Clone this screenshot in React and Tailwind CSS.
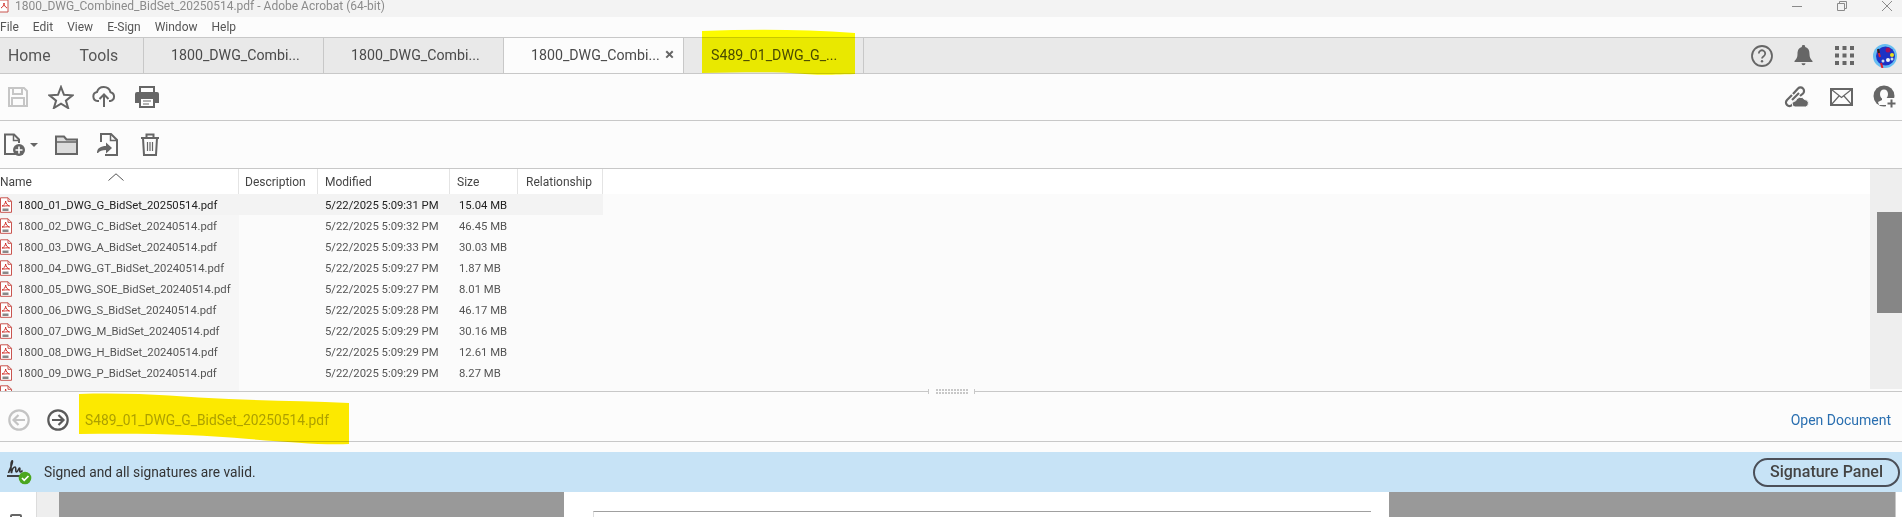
import React from 'react'

const files = [
  ['1800_01_DWG_G_BidSet_20250514.pdf', '5/22/2025 5:09:31 PM', '15.04 MB'],
  ['1800_02_DWG_C_BidSet_20240514.pdf', '5/22/2025 5:09:32 PM', '46.45 MB'],
  ['1800_03_DWG_A_BidSet_20240514.pdf', '5/22/2025 5:09:33 PM', '30.03 MB'],
  ['1800_04_DWG_GT_BidSet_20240514.pdf', '5/22/2025 5:09:27 PM', '1.87 MB'],
  ['1800_05_DWG_SOE_BidSet_20240514.pdf', '5/22/2025 5:09:27 PM', '8.01 MB'],
  ['1800_06_DWG_S_BidSet_20240514.pdf', '5/22/2025 5:09:28 PM', '46.17 MB'],
  ['1800_07_DWG_M_BidSet_20240514.pdf', '5/22/2025 5:09:29 PM', '30.16 MB'],
  ['1800_08_DWG_H_BidSet_20240514.pdf', '5/22/2025 5:09:29 PM', '12.61 MB'],
  ['1800_09_DWG_P_BidSet_20240514.pdf', '5/22/2025 5:09:29 PM', '8.27 MB'],
]

function PdfIcon() {
  return (
    <svg width="14" height="16" viewBox="0 0 14 16" className="shrink-0 -ml-[1px]">
      <path d="M1.500 .8h7.500l3.500 3.500v11h-11z" fill="#fff" stroke="#c9544f" strokeWidth="1" />
      <path d="M9 .8v3.500h3.500" fill="none" stroke="#c9544f" />
      <path d="M3 9c2-.6 3.600-2.600 3.600-5M6.600 4c.2 2.600 2 4.600 4 5M3 9c1.500.4 5-.6 7.600 0" fill="none" stroke="#d2302a" strokeWidth="1" />
      <rect x="3.500" y="11.500" width="6" height="2.500" fill="#555" opacity=".7" />
    </svg>
  )
}

function Tab({ label, active, close }) {
  return (
    <div className={active ? 'relative flex h-full w-[180px] items-center border-r border-[#c8c8c8] bg-[#fcfcfc] pl-[27px] text-[#4a4a4a]' : 'relative flex h-full w-[180px] items-center border-r border-[#c8c8c8] pl-[27px] text-[#4a4a4a]'}>
      <span>{label}</span>
      {close && <span className="absolute left-[161px] top-[8px] text-[17px] font-bold leading-none text-[#666]">×</span>}
    </div>
  )
}

function Save() {
  return (
    <svg width="22" height="22" viewBox="0 0 22 22" fill="none" stroke="#c6c6c6" strokeWidth="2">
      <path d="M2 2h15l3 3v15H2z" />
      <path d="M6 2v6h9V2M5 20v-8h12v8" />
    </svg>
  )
}

function Star() {
  return (
    <svg width="26" height="24" viewBox="0 0 26 24" fill="none" stroke="#666" strokeWidth="2" strokeLinejoin="miter">
      <path d="M13 2l3 7.800 8.500.5-6.600 5.300 2.200 7.400L13 18.600 5.900 23l2.200-7.400L1.500 10.300l8.500-.5z" />
    </svg>
  )
}

function Upload() {
  return (
    <svg width="24" height="22" viewBox="0 0 24 22" fill="none" stroke="#666" strokeWidth="2">
      <path d="M7 15H5.500a4.500 4.500 0 0 1-.5-8.900A7 7 0 0 1 18.500 6.200 4.500 4.500 0 0 1 18.500 15H17" />
      <path d="M12 21V9M7.500 13l4.500-4.500 4.500 4.500" />
    </svg>
  )
}

function Printer() {
  return (
    <svg width="24" height="22" viewBox="0 0 24 22">
      <path d="M5 1h14v6H5z" fill="none" stroke="#666" strokeWidth="2" />
      <path d="M2 6h20a2 2 0 0 1 2 2v9h-4v-5H4v5H0V8a2 2 0 0 1 2-2z" fill="#666" />
      <path d="M5 12h14v9H5z" fill="#fff" stroke="#666" strokeWidth="2" />
      <path d="M8 15h8M8 18h6" stroke="#666" />
    </svg>
  )
}

function NewDoc() {
  return (
    <svg width="24" height="24" viewBox="0 0 24 24" fill="none">
      <path d="M12 21H2V1.500h9l5 5V10" stroke="#666" strokeWidth="2" />
      <path d="M10.500 1.500V7.500H16" stroke="#666" strokeWidth="1.500" />
      <circle cx="16" cy="17" r="6" fill="#666" />
      <path d="M16 13.500v7M12.500 17h7" stroke="#fff" strokeWidth="1.600" />
    </svg>
  )
}

function Folder() {
  return (
    <svg width="23" height="20" viewBox="0 0 23 20">
      <path d="M1 19V1.500h8l2.500 3H22V19z" fill="#dcdcdc" stroke="#666" strokeWidth="2" />
      <path d="M1 7h21" stroke="#666" strokeWidth="1.500" />
    </svg>
  )
}

function MoveDoc() {
  return (
    <svg width="22" height="23" viewBox="0 0 22 23" fill="none">
      <path d="M5 9V1h10l6 6v15H9" stroke="#666" strokeWidth="2" />
      <path d="M14.500 1v6.500H21" stroke="#666" strokeWidth="1.500" />
      <path d="M1 20c0-5 4-7 9-7V9.500l6 5.500-6 5.500V17c-4 0-6 .8-8 3z" fill="#666" />
    </svg>
  )
}

function Trash() {
  return (
    <svg width="20" height="23" viewBox="0 0 20 23" fill="none" stroke="#666" strokeWidth="2">
      <path d="M1 5h18M6.500 5V1.500h7V5M3 5l1 17h12l1-17" />
      <path d="M7.500 9v9M10 9v9M12.500 9v9" strokeWidth="1.200" />
    </svg>
  )
}

function Help() {
  return (
    <svg width="22" height="22" viewBox="0 0 22 22" fill="none">
      <circle cx="11" cy="11" r="10" stroke="#666" strokeWidth="1.800" />
      <path d="M7.800 8.500a3.200 3.200 0 1 1 4.900 2.700c-1 .7-1.700 1.300-1.700 2.300" stroke="#666" strokeWidth="1.800" />
      <circle cx="11" cy="16.300" r="1.200" fill="#666" />
    </svg>
  )
}

function Bell() {
  return (
    <svg width="19" height="21" viewBox="0 0 19 21" fill="#666">
      <path d="M9.500 0a1.600 1.600 0 0 1 1.600 1.900C14.500 2.700 15.500 5.500 15.500 9c0 3.500 1 5 3 7v1H.5v-1c2-2 3-3.500 3-7 0-3.500 1-6.300 4.400-7.100A1.600 1.600 0 0 1 9.500 0z" />
      <path d="M7.500 18.300h4a2 2 0 0 1-4 0z" />
    </svg>
  )
}

function Apps() {
  const cells = [0, 7.5, 15]
  return (
    <svg width="19" height="19" viewBox="0 0 19 19" fill="#666">
      {cells.map((y) => cells.map((x) => <rect key={`${x}-${y}`} x={x} y={y} width="4" height="4" />))}
    </svg>
  )
}

function Avatar() {
  return (
    <svg width="24" height="24" viewBox="0 0 24 24">
      <circle cx="12" cy="12" r="12" fill="#66bdf2" />
      <circle cx="12.500" cy="12" r="9.500" fill="#1c32c4" />
      <path d="M5 6l2 7M8 19l1.500 5" stroke="#e02030" strokeWidth="2" />
      <path d="M5 5l1 4" stroke="#222" strokeWidth="2" />
      <circle cx="15" cy="6" r="2.500" fill="#a01060" />
      <circle cx="19" cy="11" r="2" fill="#e8e020" />
      <circle cx="15" cy="16" r="2" fill="#f4f4f4" />
      <circle cx="10" cy="17" r="1.500" fill="#cde" />
      <circle cx="19" cy="15" r="1.500" fill="#cde" />
    </svg>
  )
}

function LinkCloud() {
  return (
    <svg width="25" height="22" viewBox="0 0 25 22" fill="none">
      <path d="M8 9l-5 5a3.400 3.400 0 0 0 5 5l4-4" stroke="#666" strokeWidth="2.200" />
      <path d="M8 14l7-7" stroke="#666" strokeWidth="2.200" />
      <path d="M9 8l5-5.500a3.400 3.400 0 0 1 5 5L16 10" stroke="#666" strokeWidth="2.200" />
      <path d="M11 21a3 3 0 0 1 .5-6 5 5 0 0 1 9-1.500 3.800 3.800 0 0 1 1 7.500z" fill="#666" stroke="#fcfcfc" />
    </svg>
  )
}

function Mail() {
  return (
    <svg width="23" height="18" viewBox="0 0 23 18" fill="none" stroke="#666">
      <rect x="1" y="1" width="21" height="16" strokeWidth="2" />
      <path d="M1.500 1.500l10 8 10-8M1.500 16.500l7.500-8.500M21.500 16.500L14 8" strokeWidth="1.200" />
    </svg>
  )
}

function UserAdd() {
  return (
    <svg width="24" height="24" viewBox="0 0 24 24">
      <circle cx="11" cy="11" r="10.500" fill="#666" />
      <path d="M11 4.500c2.500 0 4 2 4 4.500 0 2-.8 3.500-2 4.500v1.500l4 2-2 3H6l-1-3 4-2v-1.500C7.800 12.500 7 11 7 9c0-2.500 1.500-4.500 4-4.500z" fill="#fcfcfc" />
      <rect x="13" y="13" width="11" height="11" fill="#fcfcfc" />
      <path d="M18.500 14.500v8M14.500 18.500h8" stroke="#666" strokeWidth="2" />
    </svg>
  )
}

function CircleArrow({ color, flip }) {
  return (
    <svg width="22" height="22" viewBox="0 0 22 22" fill="none" stroke={color} strokeWidth="2.200" className={flip ? '-scale-x-100' : ''}>
      <circle cx="11" cy="11" r="9.700" />
      <path d="M5 11h11M11.500 6l5 5-5 5" />
    </svg>
  )
}

function SignIcon() {
  return (
    <svg width="26" height="26" viewBox="0 0 26 26" fill="none">
      <path d="M2.500 14C4 10 6.500 5 6.500 2.500 6.500 1 5 2 5 6c0 3 0 6 .5 8 .5-3 2-6 3.500-6s0 5 1.500 5 2-4 3-4-.5 4 1 4 1-1 2-1.500" stroke="#333" strokeWidth="1.600" />
      <path d="M1 17h15" stroke="#333" strokeWidth="1.800" />
      <circle cx="19" cy="19" r="6.300" fill="#4ba61f" />
      <path d="M16 19l2.200 2.300L22.500 17" stroke="#fff" strokeWidth="1.700" />
    </svg>
  )
}

export default function App() {
  return (
    <div className="relative flex h-screen w-full flex-col overflow-hidden bg-[#fcfcfc] font-['Roboto',sans-serif] text-[#4a4a4a]">
      {/* title bar */}
      <div className="flex h-[17px] shrink-0 items-start bg-[#f3f3f3] pr-[10px]">
        <svg width="9" height="13" viewBox="0 0 9 13" className="shrink-0">
          <path d="M0 0h8v12H0" fill="#fff" stroke="#c9544f" />
          <path d="M1 8c2-1 3-3 3-5 0 2 1 4 3 5" fill="none" stroke="#d2302a" />
        </svg>
        <span className="ml-[6px] text-[12px] leading-[13px] text-[#8b8b8b]">1800_DWG_Combined_BidSet_20250514.pdf - Adobe Acrobat (64-bit)</span>
        <div className="ml-auto flex items-center gap-[35px] pt-px">
          <div className="h-px w-[10px] bg-[#8a8a8a]" />
          <svg width="10" height="10" viewBox="0 0 10 10" fill="none" stroke="#8a8a8a"><path d="M.5 2.500h7v7h-7zM2.500 2.500V.5h7v7h-2" /></svg>
          <svg width="10" height="10" viewBox="0 0 10 10" fill="none" stroke="#8a8a8a"><path d="M0 0l10 10M10 0L0 10" /></svg>
        </div>
      </div>

      {/* menu bar */}
      <div className="flex h-[20px] shrink-0 items-center gap-[14px] text-[12px] text-[#555]">
        <span>File</span>
        <span>Edit</span>
        <span>View</span>
        <span>E-Sign</span>
        <span>Window</span>
        <span>Help</span>
      </div>

      {/* tabs */}
      <div className="flex h-[37px] shrink-0 items-center border-y border-[#c8c8c8] bg-[#e9e9e9] text-[14.200px]">
        <div className="flex h-full w-[144px] items-center gap-[29px] border-r border-[#c8c8c8] pl-[8px] text-[15.800px] text-[#555]">
          <span>Home</span>
          <span>Tools</span>
        </div>
        <Tab label="1800_DWG_Combi..." />
        <Tab label="1800_DWG_Combi..." />
        <Tab label="1800_DWG_Combi..." active close />
        <Tab label="S489_01_DWG_G_..." />
        <div className="ml-auto flex items-center pr-[5px]">
          <Help />
          <div className="ml-[21px]"><Bell /></div>
          <div className="ml-[22px]"><Apps /></div>
          <div className="ml-[19px]"><Avatar /></div>
        </div>
      </div>

      {/* toolbars */}
      <div className="flex h-[47px] shrink-0 items-center border-b border-[#c8c8c8] pl-[7px] pr-[5px]">
        <Save />
        <div className="ml-[19px]"><Star /></div>
        <div className="ml-[18px]"><Upload /></div>
        <div className="ml-[19px]"><Printer /></div>
        <div className="ml-auto flex items-center">
          <LinkCloud />
          <div className="ml-[21px]"><Mail /></div>
          <div className="ml-[20px]"><UserAdd /></div>
        </div>
      </div>
      <div className="flex h-[48px] shrink-0 items-center border-b border-[#c8c8c8] pl-[3px]">
        <NewDoc />
        <div className="ml-[3px] h-0 w-0 border-x-[4px] border-t-[4px] border-x-transparent border-t-[#666]" />
        <div className="ml-[17px]"><Folder /></div>
        <div className="ml-[18px]"><MoveDoc /></div>
        <div className="ml-[22px]"><Trash /></div>
      </div>

      {/* file list */}
      <div className="flex h-[222px] shrink-0 overflow-hidden">
        <div className="flex-1 overflow-hidden bg-[#fbfbfb] text-[11.300px]">
          <div className="flex h-[25px] items-center bg-white text-[12px] text-[#444]">
            <div className="relative flex h-full w-[239px] items-center border-r border-[#e4e4e4]">
              Name
              <svg width="16" height="8" viewBox="0 0 16 8" fill="none" stroke="#555" className="absolute left-[108px] top-[4px]"><path d="M.5 7.500L8 .8l7.500 6.700" /></svg>
            </div>
            <div className="flex h-full w-[79px] items-center border-r border-[#e4e4e4] pl-[6px]">Description</div>
            <div className="flex h-full w-[132px] items-center border-r border-[#e4e4e4] pl-[7px]">Modified</div>
            <div className="flex h-full w-[68px] items-center border-r border-[#e4e4e4] pl-[7px]">Size</div>
            <div className="flex h-full w-[85px] items-center border-r border-[#e4e4e4] pl-[8px]">Relationship</div>
          </div>
          {files.map(([name, date, size], i) => (
            <div key={name} className={i === 0 ? 'flex h-[21px] w-[603px] items-center bg-[#f3f3f3] text-[#222]' : 'flex h-[21px] w-[603px] items-center text-[#555]'}>
              <div className={i === 0 ? 'flex h-full w-[239px] items-center gap-[5px]' : 'flex h-full w-[239px] items-center gap-[5px] bg-[#f6f6f6]'}>
                <PdfIcon />
                <span className="pt-[3px]">{name}</span>
              </div>
              <div className="w-[86px]" />
              <div className="w-[134px] pt-[3px]">{date}</div>
              <div className="pt-[3px]">{size}</div>
            </div>
          ))}
          <div className="flex h-[10px] w-[239px] items-start bg-[#f6f6f6] pt-[2px]"><PdfIcon /></div>
        </div>
        <div className="h-[220px] w-[32px] bg-[#eeeeee] pl-[7px] pt-[43px]">
          <div className="h-[101px] bg-[#868686]" />
        </div>
      </div>

      {/* splitter and file nav */}
      <div className="relative flex h-[51px] shrink-0 items-center border-y border-y-[#c8c8c8] pl-[8px] pr-[11px] pt-[7px]">
        <div className="absolute left-[928px] -top-[4px] flex h-[7px] w-[47px] items-center justify-between bg-[#fcfcfc]">
          <span className="h-[5px] w-px bg-[#c8c8c8]" />
          <div className="grid grid-cols-[repeat(11,2px)] gap-px">
            {Array.from({ length: 22 }).map((_, i) => <span key={i} className="h-[2px] w-[2px] bg-[#c8c8c8]" />)}
          </div>
          <span className="h-[5px] w-px bg-[#c8c8c8]" />
        </div>
        <CircleArrow color="#c4c4c4" flip />
        <div className="ml-[17px]"><CircleArrow color="#5a5a5a" /></div>
        <span className="ml-[16px] text-[13.800px] text-[#adad30]">S489_01_DWG_G_BidSet_20250514.pdf</span>
        <span className="ml-auto text-[14px] text-[#2a6fb0]">Open Document</span>
      </div>

      {/* signature bar */}
      <div className="mt-[10px] flex h-[40px] shrink-0 items-center bg-[#c7e3f6] pl-[6px] pr-[2px]">
        <SignIcon />
        <span className="ml-[12px] text-[13.750px] text-[#333]">Signed and all signatures are valid.</span>
        <div className="ml-auto flex h-[29px] w-[147px] items-center justify-center rounded-full border-2 border-[#4b4f58] text-[16px] font-medium text-[#444]">Signature Panel</div>
      </div>

      {/* document area */}
      <div className="flex min-h-0 flex-1 overflow-hidden">
        <div className="w-[37px] border-r border-[#dcdcdc] bg-white pl-[10px] pt-[22px]">
          <div className="h-[14px] w-[12px] rounded-t-[2px] border-2 border-[#666]" />
        </div>
        <div className="w-[22px] bg-[#eeeeee]" />
        <div className="w-[505px] bg-[#999999]" />
        <div className="w-[825px] bg-white pl-[29px] pr-[18px] pt-[19px]">
          <div className="h-full border-l border-t border-l-[#dddddd] border-t-[#a0a0a0]" />
        </div>
        <div className="w-[506px] bg-[#999999]" />
        <div className="flex-1 border-l border-[#c8c8c8] bg-white" />
      </div>

      {/* marker highlights drawn over the shot */}
      <svg className="pointer-events-none absolute left-0 top-0 mix-blend-multiply" width="1902" height="517" viewBox="0 0 1902 517">
        <path d="M702 31c50-2 100-2 153 2v41c-30 1-40 1-50 0-35-3-70-1-103-1z" fill="#fffe00" />
        <path d="M79 394c60-2 100 3 150 5 40 2 80 2 120 4v41c-30 1-60-2-100-5-50-5-110-6-170-5z" fill="#ffec00" />
      </svg>
    </div>
  )
}
